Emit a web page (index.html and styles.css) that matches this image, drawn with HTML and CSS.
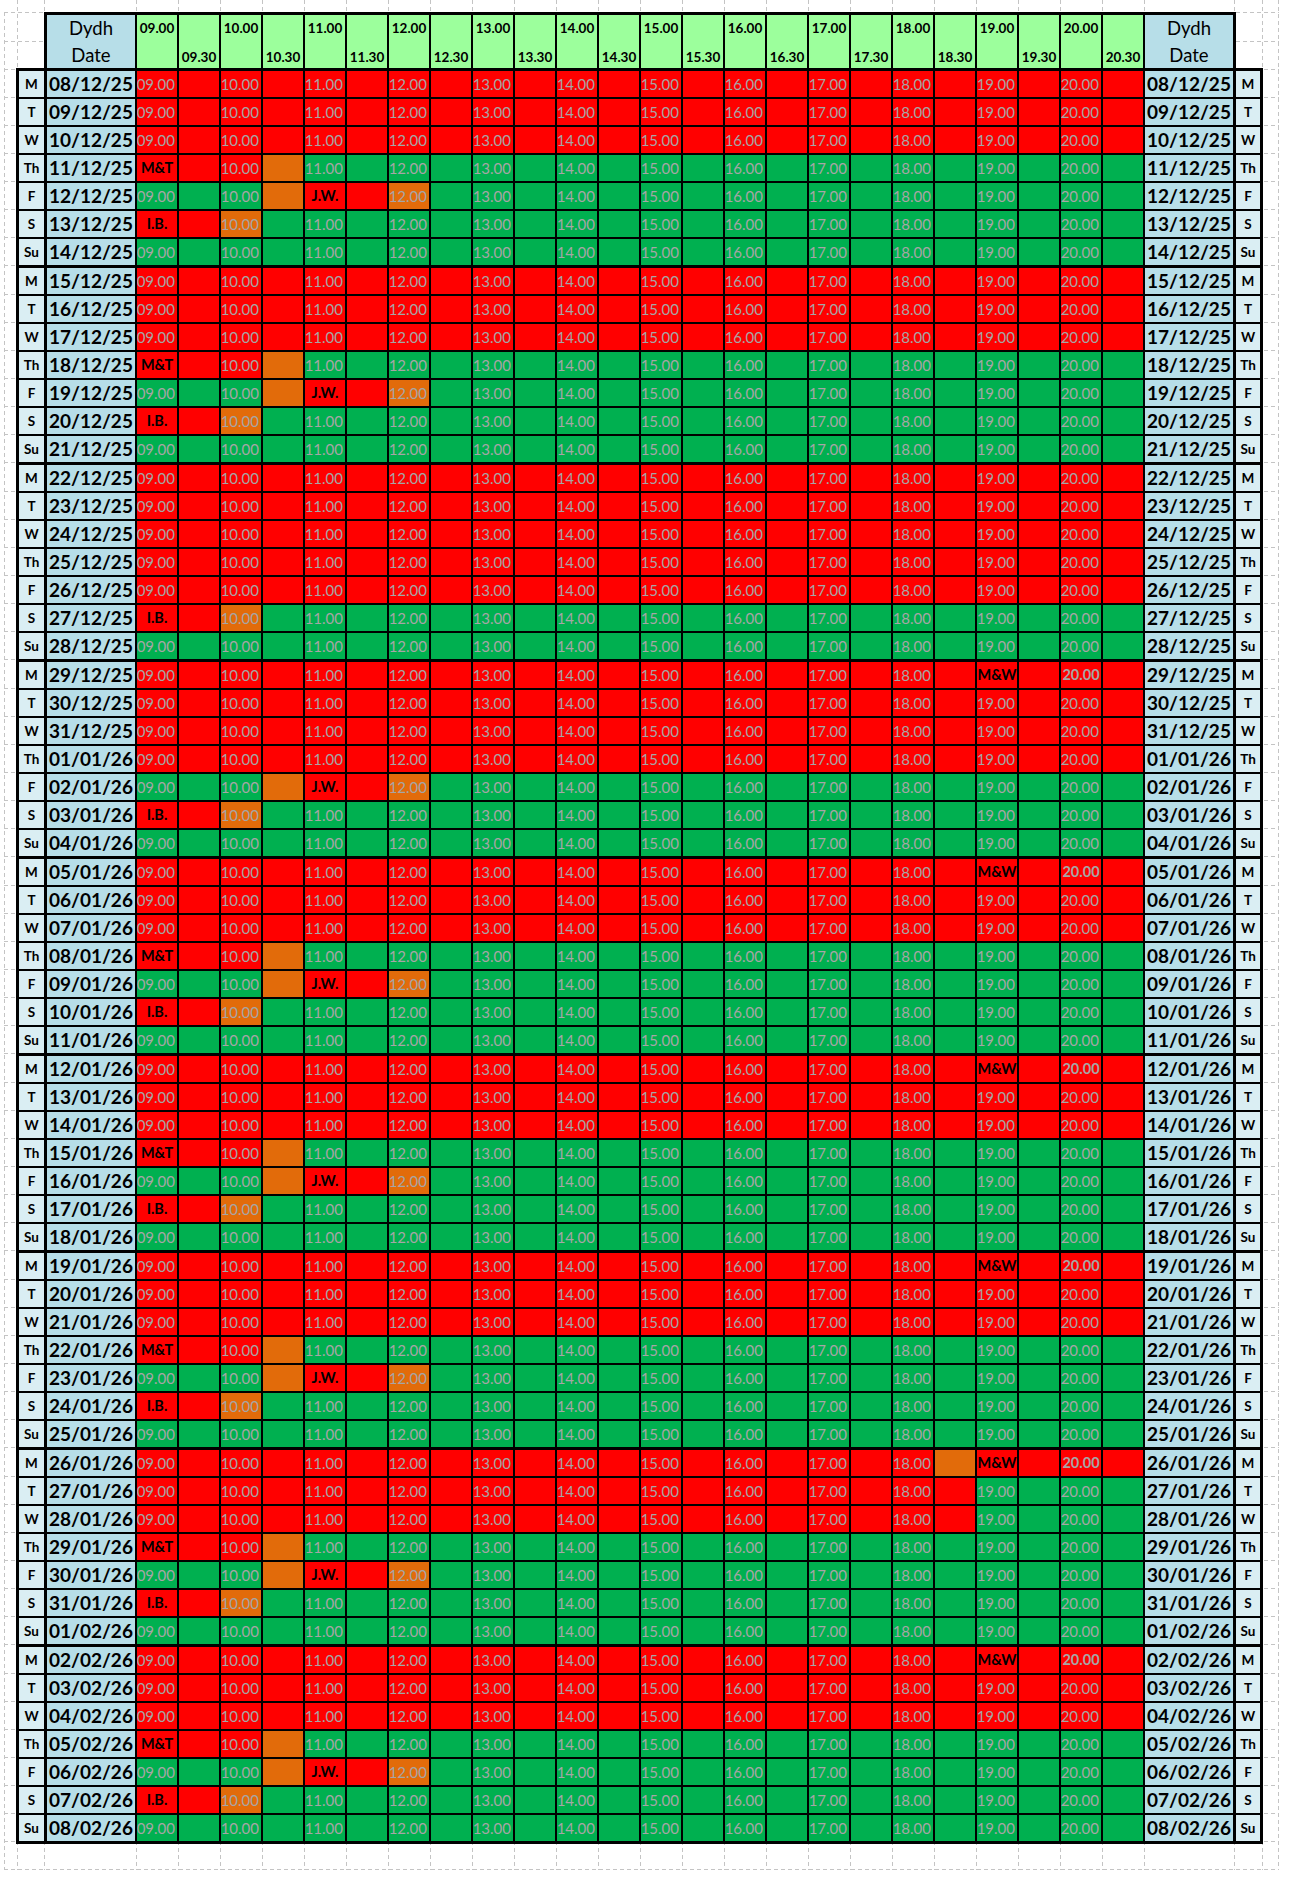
FILE: index.html
```html
<!DOCTYPE html>
<html lang="en">
<head>
<meta charset="utf-8">
<title>Rota</title>
<link rel="stylesheet" href="styles.css">
</head>
<body>
<div class="sheet">
  <svg class="gridlines" id="gridlines" width="1298" height="1894" xmlns="http://www.w3.org/2000/svg"></svg>
  <div class="table">
    <div class="head">
      <div class="hdate">Dydh<br>Date</div>
      <div class="hslot top">09.00</div>
      <div class="hslot bot">09.30</div>
      <div class="hslot top">10.00</div>
      <div class="hslot bot">10.30</div>
      <div class="hslot top">11.00</div>
      <div class="hslot bot">11.30</div>
      <div class="hslot top">12.00</div>
      <div class="hslot bot">12.30</div>
      <div class="hslot top">13.00</div>
      <div class="hslot bot">13.30</div>
      <div class="hslot top">14.00</div>
      <div class="hslot bot">14.30</div>
      <div class="hslot top">15.00</div>
      <div class="hslot bot">15.30</div>
      <div class="hslot top">16.00</div>
      <div class="hslot bot">16.30</div>
      <div class="hslot top">17.00</div>
      <div class="hslot bot">17.30</div>
      <div class="hslot top">18.00</div>
      <div class="hslot bot">18.30</div>
      <div class="hslot top">19.00</div>
      <div class="hslot bot">19.30</div>
      <div class="hslot top">20.00</div>
      <div class="hslot bot">20.30</div>
      <div class="hdate">Dydh<br>Date</div>
    </div>
    <div class="body" id="body"></div>
  </div>
</div>
<script src="script.js"></script>
</body>
</html>
```

FILE: styles.css
```css
* { box-sizing: border-box; }
html, body { margin: 0; padding: 0; background: #fff; }
body { font-family: Lato, "Open Sans", "Liberation Sans", sans-serif; color: #000; }

.sheet { position: relative; width: 1298px; height: 1894px; overflow: hidden; }
.gridlines { position: absolute; left: 0; top: 0; }

.table { position: relative; padding: 12px 0 0 16px; width: max-content; }

.head {
  margin-left: 28px;
  width: 1192px;
  height: 56px;
  background: #000;
  padding: 3px 3px 0 3px;
  display: grid;
  grid-template-columns: 88px repeat(24, 40px) 88px;
  column-gap: 2px;
}
.hdate {
  background: #b7dee8;
  text-align: center;
  font-size: 18.5px;
  line-height: 26.5px;
}
.hslot {
  background: #9cff9c;
  font-weight: 700;
  font-size: 13.5px;
  line-height: 16px;
  display: flex;
  flex-direction: column;
  align-items: center;
  white-space: nowrap;
}
.hslot.top { justify-content: flex-start; padding-top: 5px; }
.hslot.bot { justify-content: flex-end; padding-bottom: 3px; }

.body {
  width: 1247px;
  background: #000;
  padding: 3px;
  display: flex;
  flex-direction: column;
  gap: 2px;
}
.row {
  display: grid;
  grid-template-columns: 25px 89px repeat(24, 40px) 88px 25px;
  column-gap: 2px;
  height: 26px;
}
.row.wk { margin-top: 1px; }

.day {
  background: #daeef3;
  font-weight: 700;
  font-size: 13.5px;
  line-height: 26px;
  text-align: center;
}
.dayR { border-left: 1px solid #000; }
.date {
  background: #b7dee8;
  font-weight: 700;
  font-size: 19px;
  line-height: 26px;
  text-align: center;
  white-space: nowrap;
}
.dateL { border-left: 1px solid #000; }

.c {
  display: flex;
  justify-content: flex-end;
  font-size: 15px;
  line-height: 26px;
  color: #a6a6a6;
  padding-right: 2px;
  overflow: hidden;
  white-space: nowrap;
}
.red { background: #ff0000; }
.grn { background: #00b050; }
.org { background: #e26b0a; }
.c.lab { color: #000; font-weight: 700; font-size: 14.5px; justify-content: center; padding-right: 0; }
.c.bold { font-weight: 700; font-size: 14.5px; justify-content: center; padding-right: 0; }
```

FILE: script.js
```js
(function () {
  var body = document.getElementById('body');
  var dayNames = ['M', 'T', 'W', 'Th', 'F', 'S', 'Su'];
  var allRed = [17, 18, 24];
  var mw = [21, 28, 35, 42, 49, 56];
  function pad(n) { return (n < 10 ? '0' : '') + n; }
  function el(cls, text) {
    var d = document.createElement('div');
    d.className = cls;
    if (text) {
      var s = document.createElement('span');
      s.textContent = text;
      d.appendChild(s);
    }
    return d;
  }
  for (var i = 0; i < 63; i++) {
    var d = new Date(2025, 11, 8 + i);
    var ds = pad(d.getDate()) + '/' + pad(d.getMonth() + 1) + '/' + String(d.getFullYear()).slice(2);
    var wd = i % 7;
    var bg = [];
    for (var k = 0; k < 24; k++) bg.push('grn');
    var lab = {};
    var bold = {};
    if (wd <= 2 || allRed.indexOf(i) >= 0) {
      for (k = 0; k < 24; k++) bg[k] = 'red';
    } else if (wd === 3) {
      bg[0] = bg[1] = bg[2] = 'red'; bg[3] = 'org'; lab[0] = 'M&T';
    } else if (wd === 4) {
      bg[3] = 'org'; bg[4] = 'red'; bg[5] = 'red'; bg[6] = 'org'; lab[4] = 'J.W.';
    } else if (wd === 5) {
      bg[0] = 'red'; bg[1] = 'red'; bg[2] = 'org'; lab[0] = 'I.B.';
    }
    if (mw.indexOf(i) >= 0) { lab[20] = 'M&W'; bold[22] = true; }
    if (i === 49) bg[19] = 'org';
    if (i === 50 || i === 51) { for (k = 20; k < 24; k++) bg[k] = 'grn'; }

    var row = document.createElement('div');
    row.className = 'row' + (wd === 0 && i > 0 ? ' wk' : '');
    row.appendChild(el('day dayL', dayNames[wd]));
    row.appendChild(el('date dateL', ds));
    for (k = 0; k < 24; k++) {
      var cls = 'c ' + bg[k];
      var txt = '';
      if (lab[k]) { cls += ' lab'; txt = lab[k]; }
      else if (k % 2 === 0) {
        txt = pad(9 + k / 2) + '.00';
        if (bold[k]) cls += ' bold';
      }
      row.appendChild(el(cls, txt));
    }
    row.appendChild(el('date dateR', ds));
    row.appendChild(el('day dayR', dayNames[wd]));
    body.appendChild(row);
  }

  // background sheet gridlines
  var svg = document.getElementById('gridlines');
  var parts = [];
  var stroke = ' stroke="#c4c4c4" stroke-width="1" stroke-dasharray="4 3"';
  var xs = [17.5, 44.5];
  for (k = 0; k <= 24; k++) xs.push(136.5 + 42 * k);
  xs.push(1234.5, 1262.5, 1278.5);
  parts.push('<line x1="4.5" y1="12" x2="4.5" y2="1870"' + stroke + '/>');
  xs.forEach(function (x) {
    parts.push('<line x1="' + x + '" y1="0" x2="' + x + '" y2="1870"' + stroke + '/>');
  });
  var ys = [12.5, 41.5, 69.5, 1869.5];
  var rows = body.children;
  for (var r = 0; r < rows.length; r++) {
    ys.push(Math.round(rows[r].getBoundingClientRect().bottom) + 0.5);
  }
  ys.forEach(function (y) {
    parts.push('<line x1="4" y1="' + y + '" x2="1279" y2="' + y + '"' + stroke + '/>');
  });
  svg.innerHTML = parts.join('');
})();
```
